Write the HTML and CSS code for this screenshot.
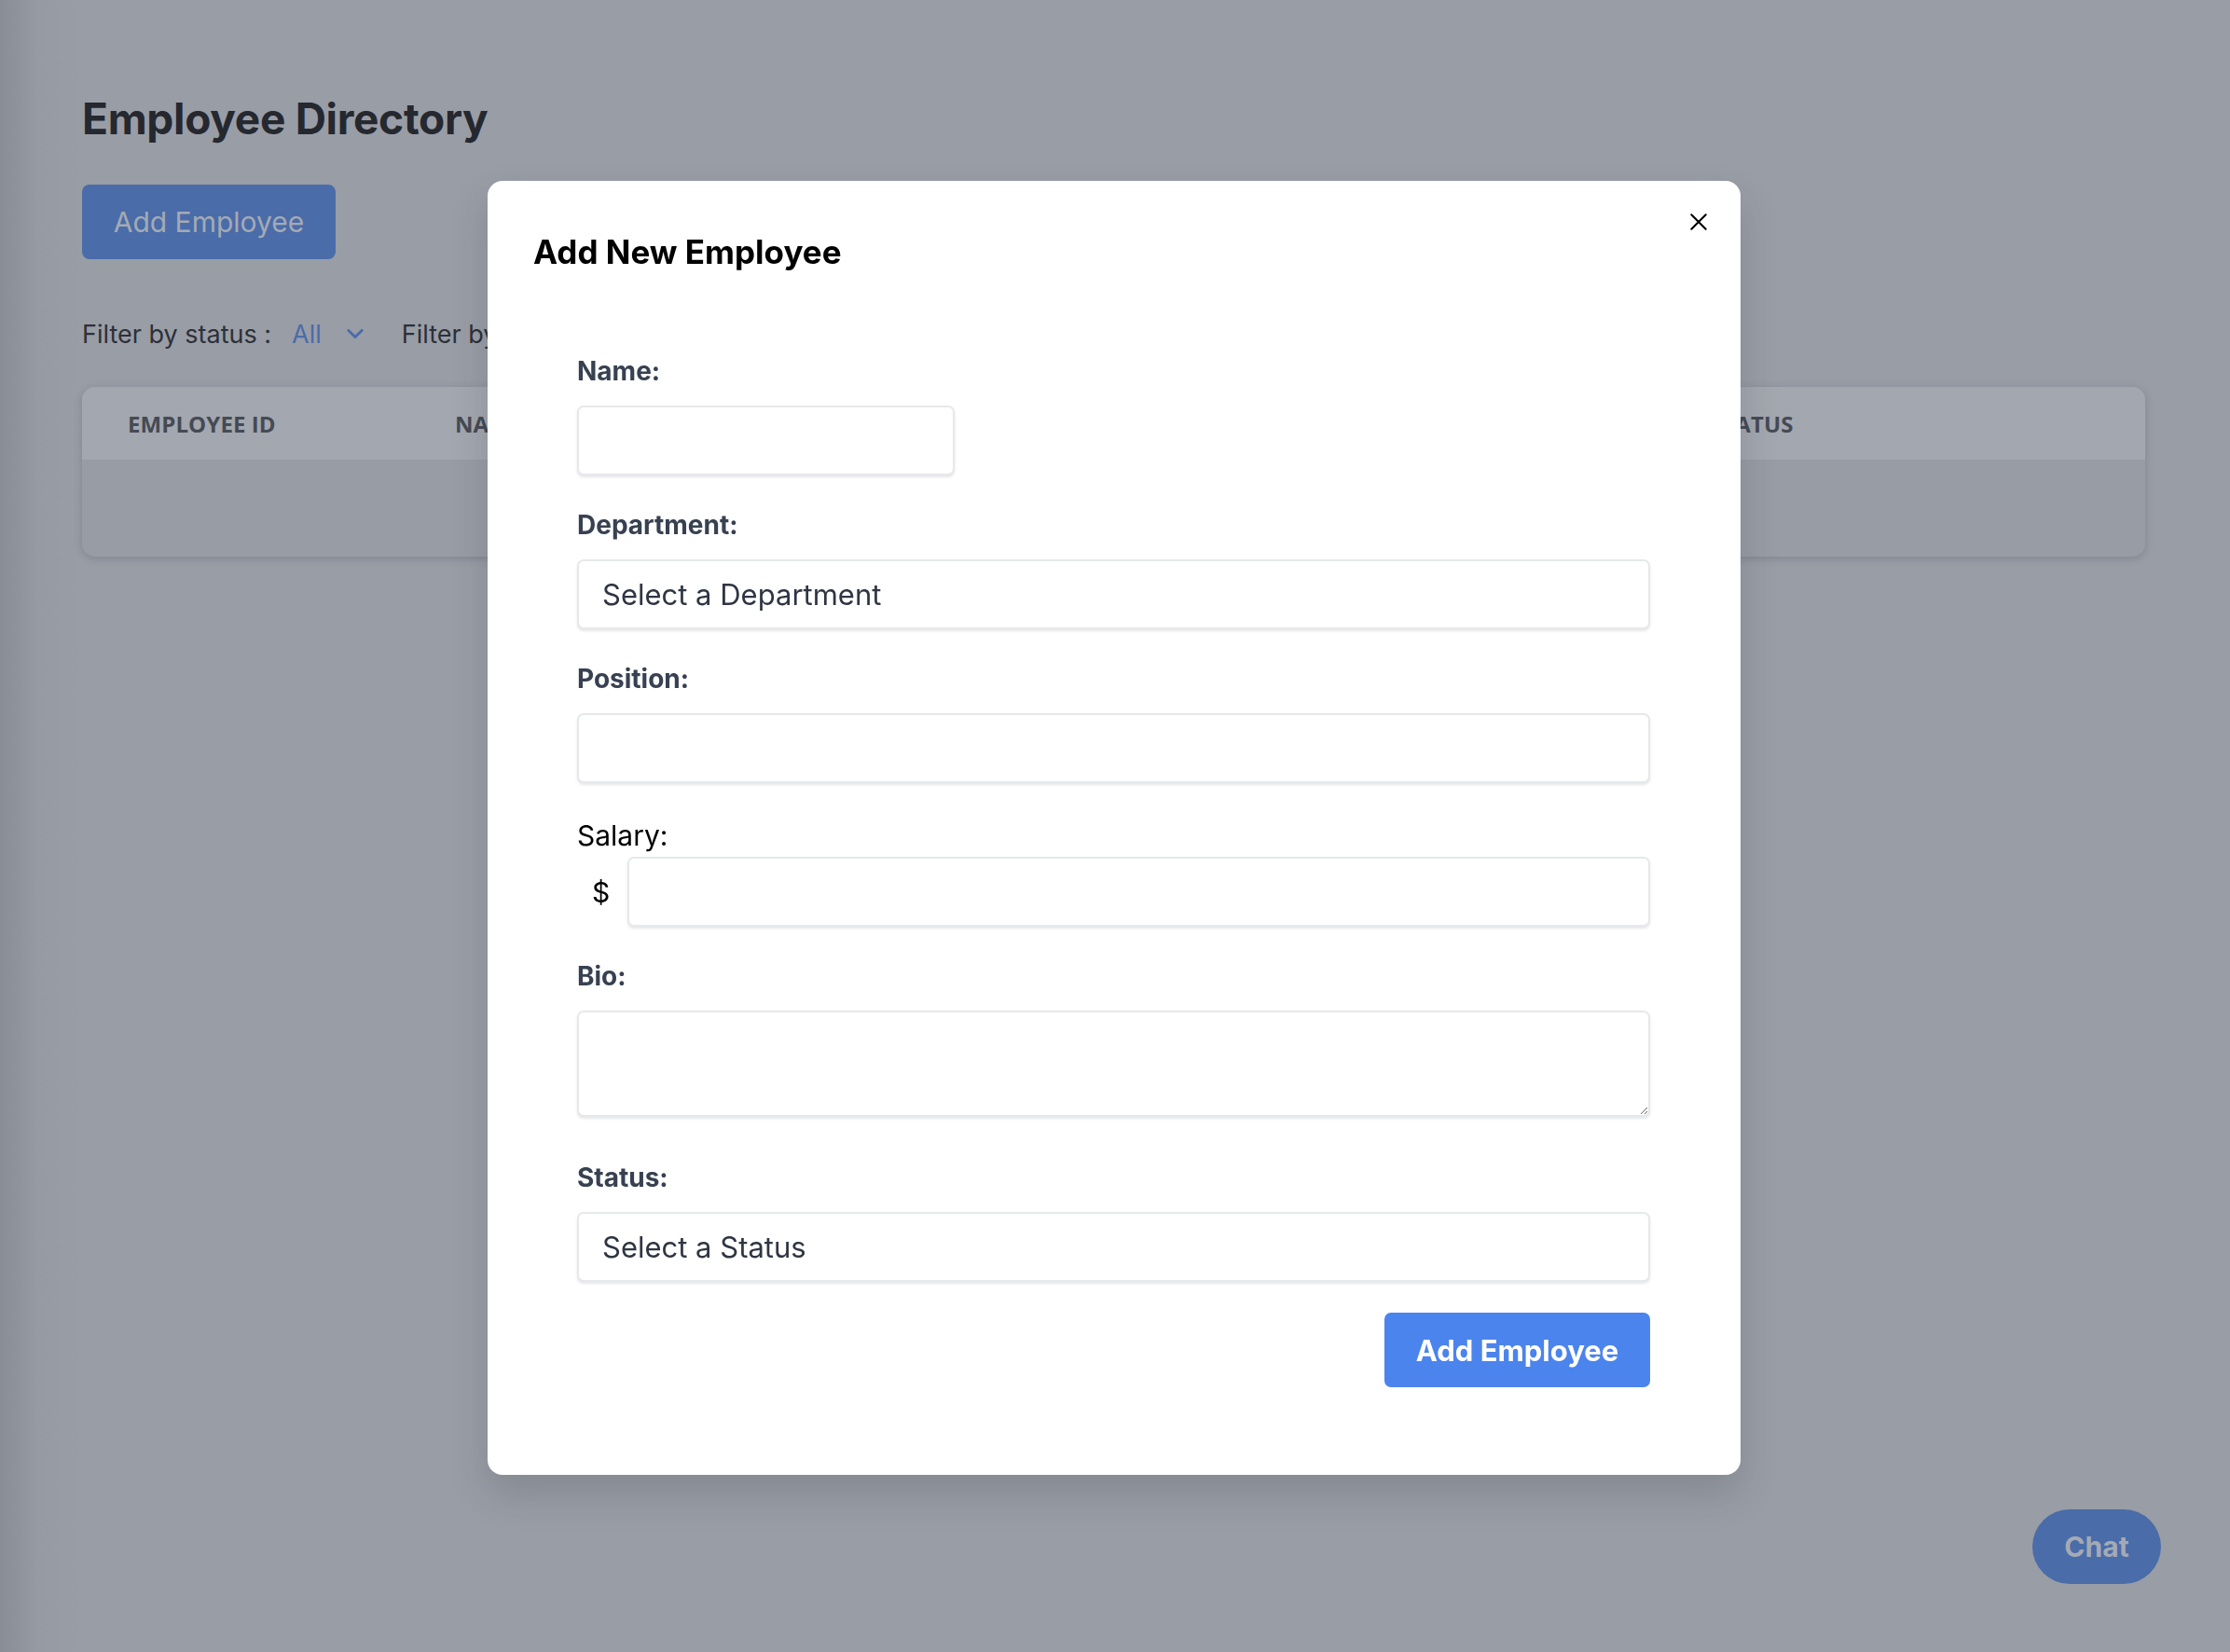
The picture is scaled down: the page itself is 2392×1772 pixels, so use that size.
FILE: index.html
```html
<!DOCTYPE html>
<html lang="en">
<head>
<meta charset="utf-8">
<title>Employee Directory</title>
<link rel="stylesheet" href="styles.css">
</head>
<body>
<main class="page">
  <h1 class="page-title">Employee Directory</h1>
  <button class="btn-open" type="button">Add Employee</button>
  <div class="filters">
    <span class="filter-label">Filter by status :</span>
    <span class="filter-value">All</span>
    <svg class="chev" viewBox="0 0 20 20" width="22" height="22"><path d="M4 7l6 6 6-6" fill="none" stroke="currentColor" stroke-width="2.4" stroke-linecap="round" stroke-linejoin="round"/></svg>
    <span class="filter-label second">Filter by department :</span>
  </div>
  <div class="table-card">
    <div class="thead">
      <div class="th c1">EMPLOYEE ID</div>
      <div class="th c2">NAME</div>
      <div class="th c3">DEPARTMENT</div>
      <div class="th c4">POSITION</div>
      <div class="th c5">STATUS</div>
    </div>
    <div class="tbody"></div>
  </div>
</main>

<div class="backdrop">
  <div class="modal">
    <button class="close" type="button" aria-label="Close">
      <svg viewBox="0 0 20 20" width="22" height="22"><path d="M3 3L17 17M17 3L3 17" stroke="#000" stroke-width="1.9" stroke-linecap="round"/></svg>
    </button>
    <h2 class="modal-title">Add New Employee</h2>
    <form class="form">
      <label class="label">Name:</label>
      <input class="field short" type="text">
      <label class="label">Department:</label>
      <div class="field select">Select a Department</div>
      <label class="label">Position:</label>
      <input class="field pos" type="text">
      <label class="label plain">Salary:</label>
      <div class="salary-row">
        <span class="dollar">$</span>
        <input class="field grow" type="text">
      </div>
      <label class="label">Bio:</label>
      <textarea class="field area"></textarea>
      <label class="label">Status:</label>
      <div class="field select last">Select a Status</div>
      <div class="actions">
        <button class="btn-submit" type="button">Add Employee</button>
      </div>
    </form>
  </div>
</div>

<button class="chat" type="button">Chat</button>
</body>
</html>
```

FILE: styles.css
```css
* { box-sizing: border-box; }
html, body { margin: 0; height: 100%; }
body {
  background: linear-gradient(to right, #898d95 0px, #959aa3 40px, #999da6 90px, #999da6 100%);
  font-family: Inter, "Noto Sans", sans-serif;
  overflow: hidden;
}
.page {
  padding: 96px 88px 0 88px;
  display: flex;
  flex-direction: column;
  align-items: flex-start;
}
.page-title {
  margin: 0;
  font-size: 46px;
  line-height: 62px;
  font-weight: 700;
  color: #25282f;
  letter-spacing: -0.3px;
}
.btn-open {
  margin-top: 40px;
  width: 272px;
  height: 80px;
  border: 0;
  border-radius: 8px;
  background: #4a6ca9;
  color: #a4aab4;
  font-family: Inter, sans-serif;
  font-size: 30px;
}
.filters {
  margin-top: 60px;
  display: flex;
  align-items: center;
  height: 40px;
  font-size: 27px;
  color: #2d3038;
}
.filter-value { color: #4a6ca9; margin-left: 22px; }
.chev { color: #4a6ca9; margin-left: 24px; width: 24px; height: 24px; }
.second { margin-left: 38px; }
.table-card {
  margin-top: 37px;
  width: 2213px;
  height: 182px;
  border-radius: 14px;
  overflow: hidden;
  background: #989ca5;
  box-shadow: 0 2px 8px rgba(60,64,72,0.25);
}
.thead {
  height: 78px;
  background: #a3a7af;
  display: flex;
  align-items: center;
  font-family: "Open Sans", sans-serif;
  font-weight: 700;
  font-size: 24px;
  color: #454a54;
  letter-spacing: 0.1px;
}
.th { padding-left: 49px; }
.c1 { width: 351px; }
.c2 { width: 400px; }
.c3 { width: 400px; }
.c4 { width: 546px; }

.backdrop {
  position: fixed;
  inset: 0;
  display: flex;
  justify-content: center;
  align-items: flex-start;
  padding-top: 194px;
  padding-right: 2px;
}
.modal {
  position: relative;
  width: 1344px;
  height: 1388px;
  background: #fff;
  border-radius: 16px;
  padding: 48px 97px 0 49px;
  box-shadow: 0 20px 40px rgba(40,44,52,0.18);
}
.close {
  position: absolute;
  top: 33px;
  right: 34px;
  width: 22px;
  height: 22px;
  padding: 0;
  border: 0;
  background: none;
}
.close svg { display: block; }
.modal-title {
  margin: 0;
  font-size: 35px;
  line-height: 56px;
  font-weight: 700;
  color: #000;
}
.form {
  margin-top: 83px;
  padding-left: 47px;
  display: flex;
  flex-direction: column;
}
.label {
  font-size: 28px;
  font-weight: 700;
  color: #374151;
  line-height: 34px;
  margin-bottom: 20px;
}
.plain {
  font-weight: 400;
  color: #000;
  font-size: 30px;
  margin-bottom: 6px;
}
.field {
  display: block;
  width: 100%;
  height: 75px;
  border: 2px solid #e7e8ec;
  border-radius: 7px;
  background: #fff;
  box-shadow: 0 2px 3px rgba(0,0,0,0.1);
  font-family: Inter, sans-serif;
  margin: 0 0 36px 0;
  outline: none;
}
.short { width: 405px; }
.pos { margin-bottom: 39px; }
.select {
  display: flex;
  align-items: center;
  padding-left: 25px;
  font-size: 31px;
  color: #2f3542;
}
.last { margin-bottom: 33px; }
.salary-row {
  display: flex;
  align-items: center;
  margin-bottom: 36px;
}
.dollar {
  width: 54px;
  padding-left: 16px;
  font-size: 30px;
  color: #000;
}
.grow { flex: 1; width: auto; margin-bottom: 0; }
.area {
  height: 114px;
  resize: vertical;
  margin-bottom: 48px;
}
.actions {
  display: flex;
  justify-content: flex-end;
}
.btn-submit {
  width: 285px;
  height: 80px;
  border: 0;
  border-radius: 7px;
  background: #4b84ec;
  color: #fff;
  font-family: Inter, sans-serif;
  font-weight: 700;
  font-size: 31px;
}
.chat {
  position: fixed;
  left: 2180px;
  top: 1619px;
  width: 138px;
  height: 80px;
  border: 0;
  border-radius: 40px;
  background: #4a6ca9;
  color: #a4aab4;
  font-family: Inter, sans-serif;
  font-weight: 700;
  font-size: 30px;
}
```
